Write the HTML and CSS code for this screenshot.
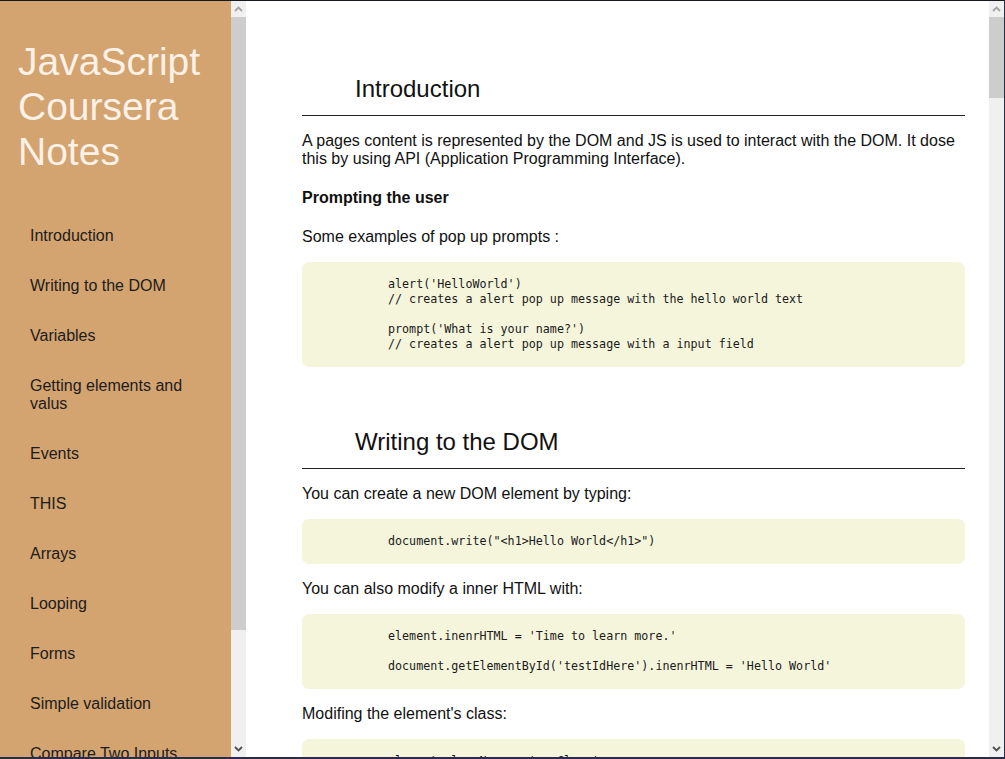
FILE: index.html
```html
<!DOCTYPE html>
<html lang="en">
<head>
<meta charset="utf-8">
<title>JavaScript Coursera Notes</title>
<link rel="stylesheet" href="styles.css">
</head>
<body>
<div class="frame">
  <aside class="sidebar">
    <h1 class="title">JavaScript Coursera Notes</h1>
    <nav class="nav">
      <a class="nav-item" href="#intro">Introduction</a>
      <a class="nav-item" href="#dom">Writing to the DOM</a>
      <a class="nav-item" href="#vars">Variables</a>
      <a class="nav-item" href="#get">Getting elements and valus</a>
      <a class="nav-item" href="#events">Events</a>
      <a class="nav-item" href="#this">THIS</a>
      <a class="nav-item" href="#arrays">Arrays</a>
      <a class="nav-item" href="#loop">Looping</a>
      <a class="nav-item" href="#forms">Forms</a>
      <a class="nav-item" href="#valid">Simple validation</a>
      <a class="nav-item" href="#compare">Compare Two Inputs</a>
    </nav>
  </aside>
  <div class="scrollbar">
    <div class="sb-btn"><svg width="9" height="6" viewBox="0 0 9 6"><path d="M1 5 L4.5 1.5 L8 5" fill="none" stroke="#a3a3a3" stroke-width="1.8"/></svg></div>
    <div class="sb-track">
      <div class="sb-thumb side-thumb"></div>
    </div>
    <div class="sb-btn"><svg width="9" height="6" viewBox="0 0 9 6"><path d="M1 1 L4.5 4.5 L8 1" fill="none" stroke="#505050" stroke-width="1.8"/></svg></div>
  </div>
  <main class="main">
    <section class="section" id="intro">
      <h2 class="section-title">Introduction</h2>
      <p>A pages content is represented by the DOM and JS is used to interact with the DOM. It dose this by using API (Application Programming Interface).</p>
      <h4 class="sub">Prompting the user</h4>
      <p>Some examples of pop up prompts :</p>
<pre class="code">alert('HelloWorld')
// creates a alert pop up message with the hello world text

prompt('What is your name?')
// creates a alert pop up message with a input field</pre>
    </section>
    <section class="section" id="dom">
      <h2 class="section-title">Writing to the DOM</h2>
      <p>You can create a new DOM element by typing:</p>
<pre class="code">document.write("&lt;h1&gt;Hello World&lt;/h1&gt;")</pre>
      <p>You can also modify a inner HTML with:</p>
<pre class="code">element.inenrHTML = 'Time to learn more.'

document.getElementById('testIdHere').inenrHTML = 'Hello World'</pre>
      <p>Modifing the element's class:</p>
<pre class="code">element.className = 'newClass'</pre>
    </section>
  </main>
  <div class="scrollbar">
    <div class="sb-btn"><svg width="9" height="6" viewBox="0 0 9 6"><path d="M1 5 L4.5 1.5 L8 5" fill="none" stroke="#a3a3a3" stroke-width="1.8"/></svg></div>
    <div class="sb-track">
      <div class="sb-thumb main-thumb"></div>
    </div>
    <div class="sb-btn"><svg width="9" height="6" viewBox="0 0 9 6"><path d="M1 1 L4.5 4.5 L8 1" fill="none" stroke="#505050" stroke-width="1.8"/></svg></div>
  </div>
</div>
</body>
</html>
```
FILE: styles.css
```css
* { box-sizing: border-box; }

html, body {
  margin: 0;
  padding: 0;
  height: 100%;
  background: #ffffff;
  overflow: hidden;
}

body {
  font-family: "Liberation Sans", Arial, sans-serif;
  font-size: 16px;
  color: #111111;
}

.frame {
  display: flex;
  height: 759px;
  border-top: 1px solid #161b20;
  border-right: 1px solid #2d2b4a;
  border-bottom: 2px solid #2d2b4a;
  overflow: hidden;
}

.sidebar {
  width: 231px;
  flex: 0 0 231px;
  background: #d3a370;
  overflow: hidden;
}

.title {
  margin: 38px 0 37px;
  padding: 0 14px 0 18px;
  font-size: 39px;
  font-weight: normal;
  line-height: 45px;
  color: #fbf1e7;
}

.nav {
  display: flex;
  flex-direction: column;
}

.nav-item {
  display: block;
  padding: 16px 30px;
  line-height: 18px;
  color: #1c1c1c;
  text-decoration: none;
}

.scrollbar {
  flex: 0 0 15px;
  width: 15px;
  display: flex;
  flex-direction: column;
  background: #f0f0f0;
}

.sb-btn {
  height: 16px;
  flex: 0 0 16px;
  display: flex;
  align-items: center;
  justify-content: center;
}

.sb-track {
  flex: 1;
  display: flex;
  flex-direction: column;
}

.sb-thumb {
  background: #cdcdcd;
}

.side-thumb { height: 613px; }
.main-thumb { height: 81px; }

.main {
  flex: 1;
  min-width: 0;
  padding: 30px 24px 0 56px;
  overflow: hidden;
}

.section {
  padding-top: 45px;
}

.section-title {
  margin: 0 0 16px;
  padding: 0 0 12px 53px;
  font-size: 24px;
  font-weight: normal;
  line-height: 28px;
  color: #111111;
  border-bottom: 1px solid #222222;
}

.section:first-child {
  padding-top: 44px;
}

p {
  margin: 16px 0;
  line-height: 18px;
}

.sub {
  margin: 21px 0;
  font-size: 16px;
  line-height: 18px;
  font-weight: bold;
}

.code {
  margin: 16px 0;
  padding: 15px 20px 15px 86px;
  background: #f5f5dc;
  border-radius: 7px;
  font-family: "DejaVu Sans Mono", "Liberation Mono", monospace;
  font-size: 11.7px;
  line-height: 15px;
  color: #1a1a1a;
  white-space: pre;
  overflow: hidden;
}
```
